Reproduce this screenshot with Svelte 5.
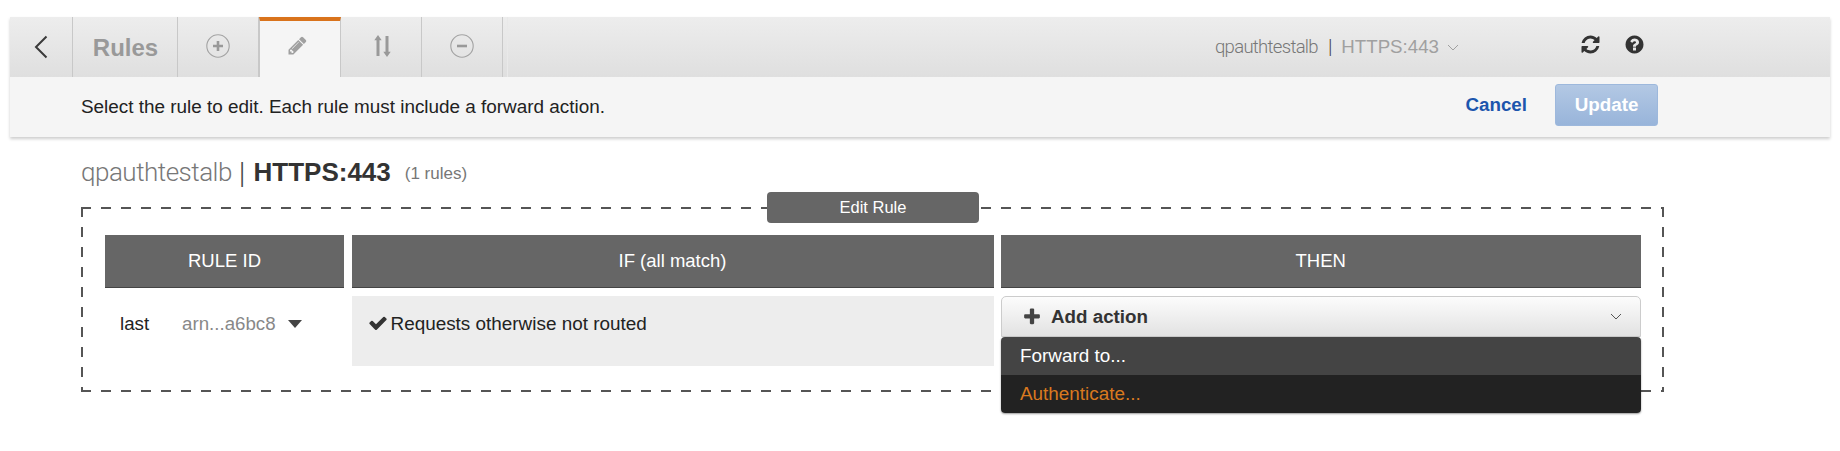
<script>
  const CHECK = "M1671 566q0 40-28 68l-724 724-136 136q-28 28-68 28t-68-28l-136-136-362-362q-28-28-28-68t28-68l136-136q28-28 68-28t68 28l294 295 656-657q28-28 68-28t68 28l136 136q28 28 28 68z";
  const PLUS = "M1600 736v192q0 40-28 68t-68 28h-416v416q0 40-28 68t-68 28h-192q-40 0-68-28t-28-68v-416h-416q-40 0-68-28t-28-68v-192q0-40 28-68t68-28h416v-416q0-40 28-68t68-28h192q40 0 68 28t28 68v416h416q40 0 68 28t28 68z";
  const PENCIL = "M491 1536l91-91-235-235-91 91v107h128v128h107zm523-928q0-22-22-22-10 0-17 7l-542 542q-7 7-7 17 0 22 22 22 10 0 17-7l542-542q7-7 7-17zm-54-192l416 416-832 832h-416v-416zm683 96q0 53-37 90l-166 166-416-416 166-165q36-38 90-38 53 0 91 38l235 234q37 39 37 91z";
  const REFRESH = "M1639 1056q0 5-1 7-64 268-268 434.5t-478 166.5q-146 0-282.5-55t-243.5-157l-129 129q-19 19-45 19t-45-19-19-45v-448q0-26 19-45t45-19h448q26 0 45 19t19 45-19 45l-137 137q71 66 161 102t187 36q134 0 250-65t186-179q11-17 53-117 8-23 30-23h192q13 0 22.5 9.5t9.5 22.5zm25-800v448q0 26-19 45t-45 19h-448q-26 0-45-19t-19-45 19-45l138-138q-148-137-349-137-134 0-250 65t-186 179q-11 17-53 117-8 23-30 23h-199q-13 0-22.5-9.5t-9.5-22.5v-7q65-268 270-434.5t480-166.5q146 0 284 55.5t245 156.5l130-129q19-19 45-19t45 19 19 45z";
  const HELP = "M1024 1376v-192q0-14-9-23t-23-9h-192q-14 0-23 9t-9 23v192q0 14 9 23t23 9h192q14 0 23-9t9-23zm256-672q0-88-55.5-163t-138.5-116-170-41q-243 0-371 213-15 24 8 42l132 100q7 6 19 6 16 0 25-12 53-68 86-92 34-24 86-24 48 0 85.5 26t37.5 59q0 38-20 61t-68 45q-63 28-115.5 86.5t-52.5 125.5v36q0 14 9 23t23 9h192q14 0 23-9t9-23q0-19 21.5-49.5t54.5-49.5q32-18 49-28.5t46-35 44.5-48 28-60.5 12.5-81zm384 192q0 209-103 385.5t-279.5 279.5-385.5 103-385.5-103-279.5-279.5-103-385.5 103-385.5 279.5-279.5 385.5-103 385.5 103 279.5 279.5 103 385.5z";
</script>

<div class="page">
  <section class="console">
    <nav class="tabs">
      <button class="tab back" aria-label="Back">
        <svg width="14" height="24" viewBox="0 0 14 24"><path d="M12.5 1.5 2 12l10.5 10.5" fill="none" stroke="#3a3a3a" stroke-width="2"/></svg>
      </button>
      <button class="tab rules">Rules</button>
      <button class="tab icon circle" aria-label="Add">
        <svg width="24" height="24" viewBox="0 0 24 24"><circle cx="12" cy="12" r="11.2" fill="none" stroke="#a3a3a3" stroke-width="1.1"/><path d="M12 7v10M7 12h10" stroke="#999" stroke-width="2.6"/></svg>
      </button>
      <button class="tab icon active" aria-label="Edit">
        <svg width="21" height="21" viewBox="0 0 1792 1792"><path d={PENCIL} fill="#a0a0a0"/></svg>
      </button>
      <button class="tab icon sort" aria-label="Reorder">
        <svg width="17" height="22" viewBox="0 0 17 22"><path d="M4 0 .3 5.2h2.2V21h3V5.2h2.2zM13 22l3.7-5.2h-2.2V1h-3v15.8H9.3z" fill="#999"/></svg>
      </button>
      <button class="tab icon circle" aria-label="Remove">
        <svg width="24" height="24" viewBox="0 0 24 24"><circle cx="12" cy="12" r="11.2" fill="none" stroke="#a3a3a3" stroke-width="1.1"/><path d="M7 12h10" stroke="#999" stroke-width="2.6"/></svg>
      </button>
      <div class="tab-fill">
        <div class="crumb">
          <span class="thin">qpauthtestalb</span><span class="bar">|</span><span class="port">HTTPS:443</span>
          <svg class="crumb-caret" width="12" height="7" viewBox="0 0 12 7"><path d="M1 1l5 5 5-5" fill="none" stroke="#a0a0a0" stroke-width="1"/></svg>
        </div>
        <div class="tools">
          <svg width="21" height="21" viewBox="0 0 1792 1792"><path d={REFRESH} fill="#333"/></svg>
          <svg width="21" height="21" viewBox="0 0 1792 1792"><path d={HELP} fill="#333"/></svg>
        </div>
      </div>
    </nav>
    <div class="hint">
      <p>Select the rule to edit. Each rule must include a forward action.</p>
      <div class="actions">
        <button class="cancel">Cancel</button>
        <button class="update">Update</button>
      </div>
    </div>
  </section>

  <main class="body">
    <h1><span class="thin">qpauthtestalb</span><span class="bar">|</span><strong>HTTPS:443</strong><small>(1 rules)</small></h1>

    <div class="editor">
      <div class="badge">Edit Rule</div>
      <div class="grid">
        <div class="head">RULE ID</div>
        <div class="head">IF (all match)</div>
        <div class="head">THEN</div>

        <div class="rule-id">
          <span class="last">last</span>
          <span class="arn">arn...a6bc8</span>
          <svg width="14" height="8" viewBox="0 0 14 8"><path d="M0 0h14L7 8z" fill="#444"/></svg>
        </div>
        <div class="cond">
          <svg width="20" height="20" viewBox="0 0 1792 1792"><path d={CHECK} fill="#333"/></svg>
          <span>Requests otherwise not routed</span>
        </div>
        <div class="then">
          <button class="add">
            <svg width="20" height="20" viewBox="0 0 1792 1792"><path d={PLUS} fill="#444"/></svg>
            <span>Add action</span>
            <svg class="add-caret" width="12" height="7" viewBox="0 0 12 7"><path d="M1 1l5 5 5-5" fill="none" stroke="#555" stroke-width="1"/></svg>
          </button>
          <ul class="menu">
            <li class="forward">Forward to...</li>
            <li class="auth">Authenticate...</li>
          </ul>
        </div>
      </div>
    </div>
  </main>
</div>

<style>
  :global(body) {
    margin: 0;
    background: #fff;
  }
  .page {
    box-sizing: border-box;
    height: 451px;
    padding: 17px 10px 0;
    font-family: "Liberation Sans", Arial, sans-serif;
    color: #333;
    overflow: hidden;
  }
  button {
    font-family: inherit;
    border: 0;
    padding: 0;
    margin: 0;
  }
  .console {
    box-shadow: 0 2px 3px rgba(0, 0, 0, 0.2);
  }
  .tabs {
    display: flex;
    height: 60px;
    background: linear-gradient(#ededed, #dfdfdf);
  }
  .tab {
    display: flex;
    align-items: center;
    justify-content: center;
    box-sizing: border-box;
    background: linear-gradient(#ededed, #dfdfdf);
    border-right: 1px solid #c8c8c8;
    margin-right: 4px;
    padding-bottom: 3px;
  }
  .back {
    width: 63px;
    padding-bottom: 0;
  }
  .rules {
    width: 101px;
    color: #999;
    font-size: 24px;
    font-weight: bold;
    padding: 2px 3px 0 0;
  }
  .icon {
    width: 77px;
  }
  .circle {
    padding-right: 5px;
  }
  .sort {
    padding-right: 1px;
  }
  .active {
    width: 82px;
    margin-left: -4px;
    background: #f5f5f5;
    border-top: 4px solid #d9731c;
    border-left: 1px solid #c8c8c8;
    border-right: 1px solid #c8c8c8;
    padding: 0 6px 8px 0;
  }
  .tab-fill {
    flex: 1;
    display: flex;
    align-items: center;
    border-left: 1px solid #e9e9e9;
    padding-bottom: 6px;
  }
  .thin {
    font-family: Roboto, "Liberation Sans", sans-serif;
    font-weight: 300;
    letter-spacing: -0.5px;
  }
  .crumb {
    margin: 6px 0 0 707px;
    display: flex;
    align-items: center;
    width: 365px;
    font-size: 18.5px;
    color: #777;
  }
  .crumb .thin {
    letter-spacing: -0.7px;
  }
  .bar {
    font-family: Roboto, "Liberation Sans", sans-serif;
    color: #444;
    font-weight: 300;
    margin: 0 9px 0 10px;
    font-size: 20px;
  }
  .port {
    color: #a0a0a0;
    font-size: 18.7px;
  }
  .crumb-caret {
    margin-left: 8px;
  }
  .tools {
    display: flex;
    gap: 23px;
  }
  .hint {
    display: flex;
    align-items: center;
    justify-content: space-between;
    height: 60px;
    padding: 0 172px 0 71px;
    background: #f5f5f5;
  }
  .hint p {
    margin: 0;
    font-size: 18.9px;
    color: #222;
  }
  .actions {
    display: flex;
    align-items: center;
    gap: 28px;
    margin-bottom: 5px;
  }
  .cancel {
    background: none;
    color: #1c55ad;
    font-size: 18.8px;
    font-weight: bold;
  }
  .update {
    width: 103px;
    height: 42px;
    border: 1px solid #9db8dc;
    border-radius: 3px;
    background: linear-gradient(#b3c8e4, #98b4da);
    color: #fff;
    font-size: 18.8px;
    font-weight: bold;
  }
  .body {
    padding-left: 71px;
  }
  h1 {
    margin: 0;
    height: 70px;
    display: flex;
    align-items: center;
    font-size: 26px;
    font-weight: normal;
    color: #777;
  }
  h1 .bar {
    margin: 0 8px 0 7px;
    font-size: 30px;
  }
  h1 strong {
    color: #333;
    font-weight: bold;
  }
  h1 small {
    margin-left: 14px;
    margin-top: 3px;
    font-size: 17px;
    color: #777;
  }
  .editor {
    position: relative;
    box-sizing: border-box;
    width: 1583px;
    height: 185px;
    padding: 28px 24px 0;
    background:
      repeating-linear-gradient(90deg, #555 0 10px, transparent 10px 20px) top / 100% 2px no-repeat,
      repeating-linear-gradient(90deg, #555 0 10px, transparent 10px 20px) bottom / 100% 2px no-repeat,
      repeating-linear-gradient(180deg, #555 0 10px, transparent 10px 20px) left / 2px 100% no-repeat,
      repeating-linear-gradient(180deg, #555 0 10px, transparent 10px 20px) right / 2px 100% no-repeat;
  }
  .badge {
    position: absolute;
    left: 686px;
    top: -15px;
    box-sizing: border-box;
    width: 212px;
    height: 31px;
    border-radius: 4px;
    background: #666;
    color: #fff;
    font-size: 16.5px;
    display: flex;
    align-items: center;
    justify-content: center;
  }
  .grid {
    display: grid;
    grid-template-columns: 239px 642px 639.5px;
    grid-template-rows: 53px 70px;
    column-gap: 7.5px;
    row-gap: 8px;
  }
  .head {
    display: flex;
    align-items: center;
    justify-content: center;
    background: #666;
    border-bottom: 1px solid #444;
    box-sizing: border-box;
    color: #fff;
    font-size: 18.5px;
  }
  .rule-id {
    display: flex;
    align-items: center;
    height: 55px;
    padding-left: 15px;
    font-size: 18.7px;
  }
  .last {
    margin-right: 33px;
    color: #222;
  }
  .arn {
    color: #888;
    margin-right: 12px;
  }
  .cond {
    display: flex;
    align-items: flex-start;
    gap: 3px;
    box-sizing: border-box;
    padding: 17px 0 0 16px;
    background: #ededed;
    font-size: 18.9px;
    color: #222;
  }
  .then {
    position: relative;
  }
  .add {
    display: flex;
    align-items: center;
    box-sizing: border-box;
    width: 100%;
    height: 41px;
    padding: 0 18px 0 20px;
    border: 1px solid #ccc;
    border-radius: 5px 5px 0 0;
    background: linear-gradient(#fcfcfc, #e2e2e2);
    color: #333;
    font-size: 18.8px;
    font-weight: bold;
    gap: 9px;
  }
  .add-caret {
    margin-left: auto;
  }
  .menu {
    position: absolute;
    left: 0;
    right: 0;
    top: 41px;
    margin: 0;
    padding: 0;
    list-style: none;
    border-radius: 4px;
    overflow: hidden;
    box-shadow: 0 1px 2px rgba(0, 0, 0, 0.4);
    font-size: 18.9px;
  }
  .menu li {
    height: 38px;
    line-height: 38px;
    padding-left: 19px;
  }
  .forward {
    background: #444;
    color: #fff;
  }
  .auth {
    background: #222;
    color: #d9791f;
  }
</style>
